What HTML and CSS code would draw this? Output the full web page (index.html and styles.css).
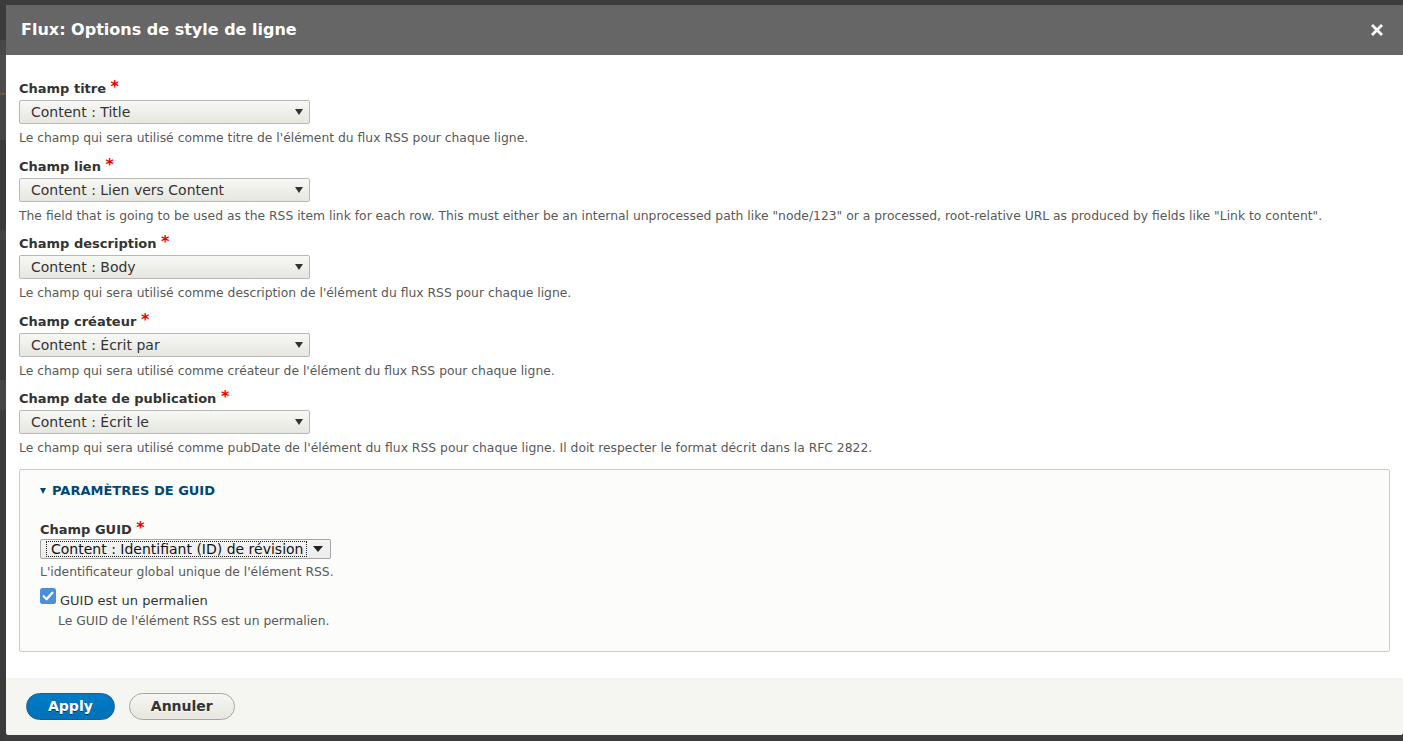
FILE: index.html
```html
<!DOCTYPE html>
<html lang="fr">
<head>
<meta charset="utf-8">
<title>Flux: Options de style de ligne</title>
<link rel="stylesheet" href="styles.css">
</head>
<body>
<div class="dialog">
  <div class="titlebar">
    <span class="title">Flux: Options de style de ligne</span>
    <button class="close" aria-label="Fermer">
      <svg width="12" height="12" viewBox="0 0 12 12"><path d="M2 2 L10 10 M10 2 L2 10" stroke="#fff" stroke-width="2.8" stroke-linecap="square" fill="none"/></svg>
    </button>
  </div>
  <div class="content">
    <div class="form-item">
      <label class="label">Champ titre <span class="req">*</span></label>
      <div class="select-wrap"><select class="select"><option>Content : Title</option></select></div>
      <div class="description">Le champ qui sera utilisé comme titre de l'élément du flux RSS pour chaque ligne.</div>
    </div>
    <div class="form-item">
      <label class="label">Champ lien <span class="req">*</span></label>
      <div class="select-wrap"><select class="select"><option>Content : Lien vers Content</option></select></div>
      <div class="description">The field that is going to be used as the RSS item link for each row. This must either be an internal unprocessed path like "node/123" or a processed, root-relative URL as produced by fields like "Link to content".</div>
    </div>
    <div class="form-item">
      <label class="label">Champ description <span class="req">*</span></label>
      <div class="select-wrap"><select class="select"><option>Content : Body</option></select></div>
      <div class="description">Le champ qui sera utilisé comme description de l'élément du flux RSS pour chaque ligne.</div>
    </div>
    <div class="form-item">
      <label class="label">Champ créateur <span class="req">*</span></label>
      <div class="select-wrap"><select class="select"><option>Content : Écrit par</option></select></div>
      <div class="description">Le champ qui sera utilisé comme créateur de l'élément du flux RSS pour chaque ligne.</div>
    </div>
    <div class="form-item">
      <label class="label">Champ date de publication <span class="req">*</span></label>
      <div class="select-wrap"><select class="select"><option>Content : Écrit le</option></select></div>
      <div class="description">Le champ qui sera utilisé comme pubDate de l'élément du flux RSS pour chaque ligne. Il doit respecter le format décrit dans la RFC 2822.</div>
    </div>
    <div class="details">
      <div class="summary"><span class="tri"></span>PARAMÈTRES DE GUID</div>
      <div class="guid-item">
        <label class="label">Champ GUID <span class="req">*</span></label>
        <div class="native-select" role="combobox"><span class="focus-text">Content : Identifiant (ID) de révision</span><span class="native-arrow"></span></div>
        <div class="description">L'identificateur global unique de l'élément RSS.</div>
      </div>
      <div class="check-row">
        <span class="checkbox"><svg width="16" height="16" viewBox="0 0 16 16"><rect x="0" y="0" width="16" height="16" rx="2.5" fill="#4a8fdc"/><path d="M3.6 8.2 L6.6 11.2 L12.4 4.8" stroke="#fff" stroke-width="2.3" fill="none" stroke-linecap="round" stroke-linejoin="round"/></svg></span>
        <span class="check-label">GUID est un permalien</span>
      </div>
      <div class="description check-desc">Le GUID de l'élément RSS est un permalien.</div>
    </div>
  </div>
  <div class="buttonpane">
    <button class="button primary">Apply</button>
    <button class="button">Annuler</button>
  </div>
</div>
</body>
</html>
```
FILE: styles.css
```css
html, body {
  margin: 0;
  height: 100%;
}
body {
  overflow: hidden;
  font-family: "DejaVu Sans", "Liberation Sans", sans-serif;
  background:
    linear-gradient(to bottom,
      #3b3b3b 0 40px, #474747 40px 55px, #4c4c4c 55px 93px, #6a5a3a 93px 95px,
      #454545 95px 140px, #3a3a3a 140px 230px, #444 230px 240px, #3b3b3b 240px 380px,
      #454545 380px 410px, #3b3b3b 410px) left top / 6px 100% no-repeat,
    #3c3c3c;
}
.dialog {
  margin: 5px 0 0 6px;
  width: 1397px;
  height: 730px;
  display: flex;
  flex-direction: column;
  background: #fff;
  border-radius: 0 0 3px 3px;
  overflow: hidden;
}
.titlebar {
  box-sizing: border-box;
  height: 50px;
  background: #666;
  color: #fff;
  display: flex;
  align-items: flex-start;
  padding: 15px 20px 15px 15px;
}
.title {
  flex: 1;
  font-size: 16px;
  font-weight: bold;
  line-height: 20px;
}
.close {
  margin-top: 4px;
  width: 12px;
  height: 12px;
  padding: 0;
  border: 0;
  background: none;
  display: block;
}
.close svg { display: block; }
.content {
  flex: 1;
  padding: 24px 13px 0 13px;
}
.form-item {
  margin-bottom: 10.5px;
}
.label {
  display: block;
  padding-top: 1px;
  font-size: 13px;
  font-weight: bold;
  line-height: 18px;
  color: #333;
}
.req {
  color: #e00;
  font-size: 16px;
  line-height: 0;
  position: relative;
  top: -1px;
}
.select-wrap {
  position: relative;
  width: 291px;
  margin-top: 2px;
}
.select-wrap::after {
  content: "";
  position: absolute;
  right: 7px;
  top: 9px;
  border-left: 4.5px solid transparent;
  border-right: 4.5px solid transparent;
  border-top: 6px solid #333;
  pointer-events: none;
}
.select {
  -webkit-appearance: none;
  appearance: none;
  box-sizing: border-box;
  display: block;
  width: 291px;
  height: 24px;
  margin: 0;
  padding: 0 24px 0 11px;
  border: 1px solid #b8b8b8;
  border-radius: 2px;
  background: linear-gradient(to bottom, #f7f7f4, #e7e7e1);
  font-family: "DejaVu Sans", sans-serif;
  font-size: 14px;
  color: #333;
}
.description {
  margin-top: 6px;
  font-size: 12.35px;
  line-height: 16px;
  color: #595959;
}
.details {
  margin-top: 12.5px;
  border: 1px solid #ccc;
  border-radius: 2px;
  background: #fcfcfa;
  padding: 12px 20px 22px 20px;
}
.summary {
  font-size: 13px;
  font-weight: bold;
  line-height: 18px;
  color: #004875;
  display: flex;
  align-items: center;
}
.tri {
  width: 0;
  height: 0;
  border-left: 3.5px solid transparent;
  border-right: 3.5px solid transparent;
  border-top: 6px solid #004875;
  margin-right: 6px;
  margin-top: 1px;
}
.guid-item {
  margin-top: 20px;
}
.native-select {
  box-sizing: border-box;
  position: relative;
  width: 291px;
  height: 20px;
  margin-top: 0;
  border: 1px solid #a6a6a6;
  border-radius: 2px;
  background: linear-gradient(to bottom, #f4f4f4, #ececec);
  display: flex;
  align-items: center;
  padding-left: 5px;
  font-size: 14px;
  color: #111;
}
.focus-text {
  border: 1px dotted #222;
  padding: 0 3px 0 4px;
  line-height: 14px;
  white-space: nowrap;
}
.native-arrow {
  position: absolute;
  right: 7px;
  top: 6px;
  border-left: 5px solid transparent;
  border-right: 5px solid transparent;
  border-top: 6px solid #222;
}
.guid-item .description {
  margin-top: 5px;
}
.check-row {
  margin-top: 8px;
  display: flex;
  align-items: flex-start;
}
.checkbox {
  width: 16px;
  height: 16px;
  display: block;
}
.checkbox svg { display: block; }
.check-label {
  margin-left: 4px;
  margin-top: 4px;
  font-size: 13px;
  line-height: 18px;
  color: #333;
}
.check-desc {
  margin-top: 3px;
  padding-left: 18px;
}
.buttonpane {
  box-sizing: border-box;
  height: 57px;
  background: #f5f5f2;
  padding: 15px 20px 0 20px;
  display: flex;
  align-items: flex-start;
  gap: 14px;
}
.button {
  box-sizing: border-box;
  height: 27px;
  padding: 0 21px;
  border: 1px solid #a6a6a6;
  border-radius: 20em;
  background: linear-gradient(to bottom, #f6f6f3, #e7e7df);
  color: #333;
  font-family: "DejaVu Sans", sans-serif;
  font-size: 14px;
  font-weight: bold;
  text-shadow: 0 1px rgba(255, 255, 255, 0.6);
  line-height: 25px;
}
.button.primary {
  background: linear-gradient(to bottom, #007bc6, #0071b8);
  border-color: #1e5c90;
  color: #fff;
  text-shadow: 0 1px rgba(0, 0, 0, 0.5);
}
```
